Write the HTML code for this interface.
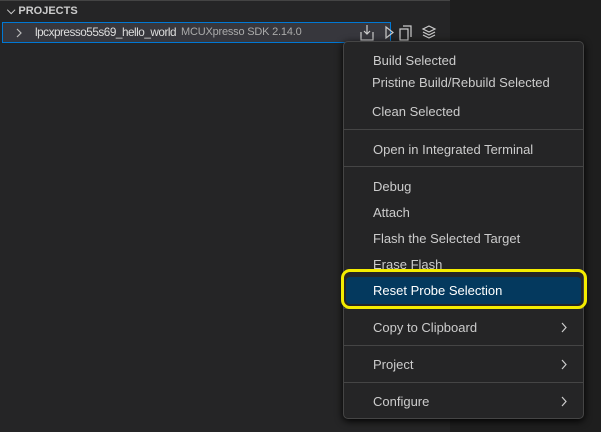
<!DOCTYPE html><html><head><style>
body{margin:0;width:601px;height:432px;background:#1e1e1e;font-family:"Liberation Sans",sans-serif;position:relative;overflow:hidden;color:#ccc}
.lp{position:absolute;left:0;top:0;width:450px;height:432px;background:#252526}
.top{position:absolute;left:0;top:0;width:450px;height:1px;background:#444}
.hdr{position:absolute;left:7px;top:5px;font-size:11px;font-weight:bold;color:#ccc}
.row{position:absolute;left:2px;top:22px;width:387px;height:19px;background:#37373d;border:1px solid #0078d4}
.row span{position:absolute;top:3px;font-size:12px;white-space:nowrap}
.menu{position:absolute;left:343px;top:41px;width:239px;height:376px;background:#252526;border:1px solid #454545;border-radius:5px;box-shadow:0 2px 8px #000}
.it{position:absolute;left:29px;font-size:13px;color:#ccc}
.sep{position:absolute;left:0;width:239px;height:1px;background:#454545}
.ar{position:absolute;right:16px}
.hl{position:absolute;left:2px;top:235px;width:235px;height:27px;background:#04395e;border-radius:4px}
.ring{position:absolute;left:341px;top:269px;width:240px;height:34px;border:3px solid #f4ec00;border-radius:9px}
</style></head><body>
<div class="lp"></div><div class="top"></div>
<div class="hdr">⌵ PROJECTS</div>
<div class="row"><svg style="position:absolute;left:13px;top:5px" width="6" height="10" fill="none" stroke="#bbb" stroke-width="1.2"><path d="M1 1l4 4-4 4"/></svg>
<span style="left:32px;color:#ddd;font-size:12px;letter-spacing:-0.5px;top:2px;display:inline-block;transform:scaleX(0.98);transform-origin:left">lpcxpresso55s69_hello_world</span><span style="left:178px;font-size:11px;color:#aaa;letter-spacing:-0.2px">MCUXpresso SDK 2.14.0</span>
<svg style="position:absolute;left:357px;top:1px" width="80" height="17" viewBox="0 0 80 17" fill="none" stroke="#ccc" stroke-width="1.2"><path d="M1 8v8h12V8M7 1v9M4 7l3 3 3-3"/><path d="M26 3v11l7-5.5z"/><path d="M40 5h8v11h-8zM43 2h8v11"/><path d="M69 2l6 3-6 3-6-3zM63 8l6 3 6-3M63 11l6 3 6-3"/></svg></div>
<div class="menu">
<div class="it" style="top:11px">Build Selected</div>
<div class="it" style="top:33px;left:28px">Pristine Build/Rebuild Selected</div>
<div class="it" style="top:62px;left:28px">Clean Selected</div>
<div class="sep" style="top:87px"></div>
<div class="it" style="top:100px">Open in Integrated Terminal</div>
<div class="sep" style="top:124px"></div>
<div class="it" style="top:137px">Debug</div>
<div class="it" style="top:163px">Attach</div>
<div class="it" style="top:189px">Flash the Selected Target</div>
<div class="it" style="top:215px">Erase Flash</div>
<div class="hl"></div>
<div class="it" style="top:241px;color:#fff">Reset Probe Selection</div>
<div class="sep" style="top:266px"></div>
<div class="it" style="top:278px">Copy to Clipboard</div><svg class="ar" style="top:280px" width="6" height="11" fill="none" stroke="#ccc" stroke-width="1.2"><path d="M1 1l4 4.5-4 4.5"/></svg>
<div class="sep" style="top:303px"></div>
<div class="it" style="top:315px">Project</div><svg class="ar" style="top:317px" width="6" height="11" fill="none" stroke="#ccc" stroke-width="1.2"><path d="M1 1l4 4.5-4 4.5"/></svg>
<div class="sep" style="top:340px"></div>
<div class="it" style="top:352px">Configure</div><svg class="ar" style="top:354px" width="6" height="11" fill="none" stroke="#ccc" stroke-width="1.2"><path d="M1 1l4 4.5-4 4.5"/></svg>
</div>
<div class="ring"></div>
</body></html>
